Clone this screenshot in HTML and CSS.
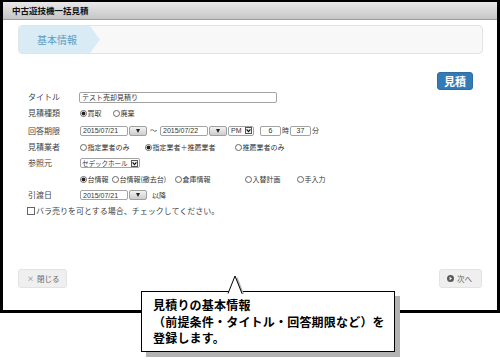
FILE: index.html
```html
<!DOCTYPE html>
<html lang="ja">
<head>
<meta charset="utf-8">
<title>中古遊技機一括見積</title>
<link rel="stylesheet" href="styles.css">
</head>
<body>
<div class="page">
  <div class="window">
    <div class="titlebar">中古遊技機一括見積</div>
    <div class="content">
      <div class="steps">
        <div class="step active">基本情報</div>
      </div>
      <div class="actions">
        <span class="btn-primary">見積</span>
      </div>
      <div class="form">
        <div class="label">タイトル</div>
        <div class="field"><span class="input title-input">テスト売却見積り</span></div>

        <div class="label">見積種類</div>
        <div class="field options opt-type">
          <span class="opt"><span class="radio on"></span>買取</span>
          <span class="opt"><span class="radio"></span>廃棄</span>
        </div>

        <div class="label">回答期限</div>
        <div class="field">
          <span class="input date">2015/07/21</span>
          <span class="cal-btn"><span class="tri"></span></span>
          <span class="tilde">～</span>
          <span class="input date">2015/07/22</span>
          <span class="cal-btn"><span class="tri"></span></span>
          <span class="input select ampm">PM<span class="sel-arrow"><svg width="5" height="5" viewBox="0 0 5 5"><path d="M0.6 1.3 L2.5 3.6 L4.4 1.3" fill="none" stroke="#111" stroke-width="1.2"/></svg></span></span>
          <span class="input num first-num">6</span>
          <span class="unit">時</span>
          <span class="input num">37</span>
          <span class="unit">分</span>
        </div>

        <div class="label">見積業者</div>
        <div class="field options opt-vendor">
          <span class="opt"><span class="radio"></span>指定業者のみ</span>
          <span class="opt"><span class="radio on"></span>指定業者＋推薦業者</span>
          <span class="opt"><span class="radio"></span>推薦業者のみ</span>
        </div>

        <div class="label">参照元</div>
        <div class="field">
          <span class="input select source"><span class="sel-text">セデックホール</span><span class="sel-arrow"><svg width="5" height="5" viewBox="0 0 5 5"><path d="M0.6 1.3 L2.5 3.6 L4.4 1.3" fill="none" stroke="#111" stroke-width="1.2"/></svg></span></span>
        </div>

        <div class="label"></div>
        <div class="field options opt-source">
          <span class="opt"><span class="radio on"></span>台情報</span>
          <span class="opt"><span class="radio"></span>台情報(撤去台)</span>
          <span class="opt"><span class="radio"></span>倉庫情報</span>
          <span class="opt"><span class="radio"></span>入替計画</span>
          <span class="opt"><span class="radio"></span>手入力</span>
        </div>

        <div class="label">引渡日</div>
        <div class="field">
          <span class="input date">2015/07/21</span>
          <span class="cal-btn"><span class="tri"></span></span>
          <span class="after">以降</span>
        </div>

        <div class="check-row"><span class="checkbox"></span>バラ売りを可とする場合、チェックしてください。</div>
      </div>
      <div class="footer">
        <span class="btn-default close"><span class="x">×</span>閉じる</span>
        <span class="btn-default next"><svg class="next-icon" width="7" height="7" viewBox="0 0 7 7"><circle cx="3.5" cy="3.5" r="3.5" fill="#5a5a5a"/><path d="M2.6 1.8 L5 3.5 L2.6 5.2 Z" fill="#fff"/></svg>次へ</span>
      </div>
    </div>
  </div>

  <div class="callout">
    <svg class="pointer" width="26" height="21" viewBox="0 0 26 21">
      <path d="M13.5 3 L20 20 L17.5 20 L12 5 Z" fill="#b3b3b3"/>
      <path d="M4 19.5 L11 2 L18 19.5 Z" fill="#fff"/>
      <path d="M4 19.5 L11 2 L18 19.5" fill="none" stroke="#000" stroke-width="1"/>
    </svg>
    <p>見積りの基本情報</p>
    <p>（前提条件・タイトル・回答期限など）を</p>
    <p>登録します。</p>
  </div>
</div>
</body>
</html>
```
FILE: styles.css
```css
* {
  box-sizing: border-box;
  margin: 0;
  padding: 0;
}

body {
  margin: 0;
  width: 500px;
  height: 360px;
  background: #fff;
  overflow: hidden;
  font-family: "Noto Sans CJK JP", "Liberation Sans", sans-serif;
  color: #333;
}

.page {
  position: relative;
  width: 500px;
  height: 360px;
}

.window {
  width: 500px;
  height: 313px;
  border: 3px solid #000;
  border-top-width: 2px;
  display: flex;
  flex-direction: column;
}

.titlebar {
  height: 18px;
  background: linear-gradient(#e9e9e9, #c6c6c6);
  border-bottom: 1px solid #9c9c9c;
  font-size: 8.5px;
  font-weight: 700;
  color: #111;
  padding-left: 9px;
  line-height: 17px;
}

.content {
  flex: 1;
  padding: 0 14px 0 15px;
}

.steps {
  margin-top: 5px;
  height: 29px;
  border: 1px solid #e3e3e3;
  border-radius: 4px;
  background: #f8f8f8;
  display: flex;
  overflow: hidden;
}

.step {
  width: 81px;
  height: 27px;
  line-height: 27px;
  font-size: 10px;
  padding-left: 18px;
}

.step.active {
  background: #d9ebf5;
  color: #5d9cc2;
  clip-path: polygon(0 0, 71px 0, 81px 50%, 71px 100%, 0 100%);
}

.actions {
  display: flex;
  justify-content: flex-end;
  margin-top: 18px;
  padding-right: 10px;
}

.btn-primary {
  width: 36px;
  height: 18px;
  display: flex;
  align-items: center;
  justify-content: center;
  background: #337ab7;
  border: 1px solid #2e6da4;
  border-radius: 3px;
  color: #fff;
  font-size: 11px;
  font-weight: 700;
  line-height: 1;
}

.form {
  display: grid;
  grid-template-columns: 52px 1fr;
  grid-template-rows: 14px 18px 17px 16px 16px 16px 16px 16px;
  align-items: center;
  padding-left: 10px;
}

.label {
  font-size: 8px;
  color: #444;
  line-height: 1;
}

.field {
  display: flex;
  align-items: center;
  font-size: 7px;
  color: #333;
  line-height: 1;
  white-space: nowrap;
}

.input {
  display: flex;
  align-items: center;
  height: 10px;
  border: 1px solid #a3a3a3;
  border-radius: 2px;
  background: #fff;
  font-family: "Liberation Sans", "Noto Sans CJK JP", sans-serif;
  font-size: 7px;
  color: #333;
  padding-left: 2px;
  line-height: 1;
  white-space: nowrap;
  overflow: hidden;
}

.title-input {
  width: 198px;
  height: 11px;
  margin-left: -1px;
  font-family: "Noto Sans CJK JP", sans-serif;
}

.date {
  width: 48px;
}

.cal-btn {
  width: 18px;
  height: 10px;
  margin-left: 1px;
  border: 1px solid #a0a0a0;
  border-radius: 2px;
  background: linear-gradient(#f2f2f2, #cdcdcd);
  display: flex;
  align-items: center;
  justify-content: center;
}

.tri {
  width: 0;
  height: 0;
  border-left: 2.5px solid transparent;
  border-right: 2.5px solid transparent;
  border-top: 4px solid #222;
}

.tilde {
  width: 13px;
  text-align: center;
  font-size: 7px;
}

.select {
  justify-content: space-between;
  padding-right: 1px;
}

.ampm {
  width: 26px;
  margin-left: 1px;
}

.source {
  width: 60px;
  font-family: "Noto Sans CJK JP", sans-serif;
  padding-left: 1px;
}

.sel-text {
  font-size: 6.6px;
  letter-spacing: -0.1px;
}

.sel-arrow {
  width: 7px;
  height: 7px;
  border: 1px solid #555;
  display: flex;
  align-items: center;
  justify-content: center;
  background: #f4f4f4;
  flex: none;
}

.num {
  width: 21px;
  justify-content: center;
  padding-left: 0;
}

.first-num {
  margin-left: 6px;
}

.unit {
  width: 9px;
  text-align: center;
  font-size: 7px;
}

.after {
  margin-left: 5px;
  font-size: 7px;
}

.options .opt {
  display: flex;
  align-items: center;
  white-space: nowrap;
}

.opt-type .opt:first-child {
  width: 33px;
}

.opt-vendor .opt:nth-child(1) {
  width: 65px;
}

.opt-vendor .opt:nth-child(2) {
  width: 90px;
}

.opt-source .opt:nth-child(1) {
  width: 32px;
}

.opt-source .opt:nth-child(2) {
  width: 63px;
}

.opt-source .opt:nth-child(3) {
  width: 70px;
}

.opt-source .opt:nth-child(4) {
  width: 52px;
}

.radio {
  width: 7px;
  height: 7px;
  border: 1px solid #666;
  border-radius: 50%;
  background: #fff;
  margin-right: 0.5px;
  flex: none;
}

.radio.on {
  background: radial-gradient(circle, #222 0 1.7px, #fff 2.2px);
}

.check-row {
  grid-column: 1 / -1;
  display: flex;
  align-items: center;
  margin-left: -1px;
  font-size: 8px;
  color: #444;
  line-height: 1;
}

.checkbox {
  width: 8px;
  height: 8px;
  border: 1px solid #666;
  background: #fff;
  margin-right: 1px;
}

.footer {
  display: flex;
  justify-content: space-between;
  margin-top: 50px;
  padding-right: 1px;
}

.btn-default {
  height: 19px;
  display: flex;
  align-items: center;
  background: #efefef;
  border: 1px solid #e3e3e3;
  border-radius: 3px;
  color: #666;
  font-size: 7.5px;
  line-height: 1;
}

.close {
  width: 49px;
  padding-left: 8px;
}

.close .x {
  font-size: 7px;
  color: #777;
  margin-right: 3px;
}

.next {
  width: 43px;
  padding-left: 7px;
}

.next-icon {
  margin-right: 3px;
}

.callout {
  position: absolute;
  left: 141px;
  top: 291px;
  width: 254px;
  height: 61px;
  border: 1px solid #000;
  background: #fff;
  box-shadow: 5px 5px 0 #b3b3b3;
  padding: 5px 0 0 11px;
  font-size: 12px;
  font-weight: 700;
  color: #000;
  line-height: 16.5px;
  letter-spacing: 0.2px;
}

.pointer {
  position: absolute;
  left: 82px;
  top: -18px;
}
```
